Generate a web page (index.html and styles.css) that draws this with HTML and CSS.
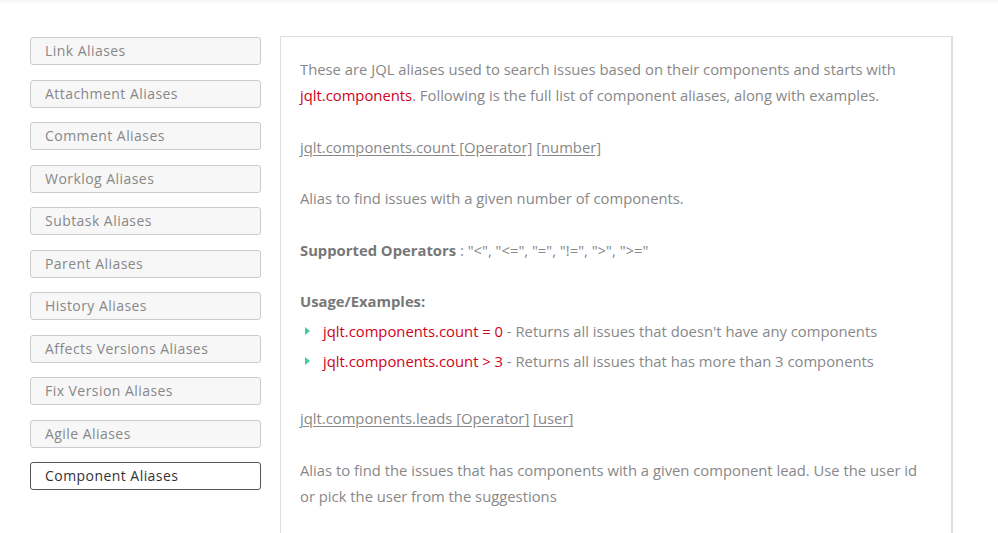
FILE: index.html
```html
<!DOCTYPE html>
<html>
<head>
<meta charset="utf-8">
<link rel="stylesheet" href="styles.css">
</head>
<body>
<div class="topshade"></div>
<div class="page">
  <nav class="sidebar">
    <a class="navbtn">Link Aliases</a>
    <a class="navbtn">Attachment Aliases</a>
    <a class="navbtn">Comment Aliases</a>
    <a class="navbtn">Worklog Aliases</a>
    <a class="navbtn">Subtask Aliases</a>
    <a class="navbtn">Parent Aliases</a>
    <a class="navbtn">History Aliases</a>
    <a class="navbtn">Affects Versions Aliases</a>
    <a class="navbtn">Fix Version Aliases</a>
    <a class="navbtn">Agile Aliases</a>
    <a class="navbtn active">Component Aliases</a>
  </nav>
  <main class="content">
    <p>These are JQL aliases used to search issues based on their components and starts with <span class="red">jqlt.components</span>. Following is the full list of component aliases, along with examples.</p>
    <p><span class="u">jqlt.components.count [Operator]</span> <span class="u">[number]</span></p>
    <p>Alias to find issues with a given number of components.</p>
    <p><b>Supported Operators</b> : "&lt;", "&lt;=", "=", "!=", "&gt;", "&gt;="</p>
    <p class="usage"><b>Usage/Examples:</b></p>
    <ul class="examples">
      <li><span class="red">jqlt.components.count = 0</span> - Returns all issues that doesn't have any components</li>
      <li><span class="red">jqlt.components.count &gt; 3</span> - Returns all issues that has more than 3 components</li>
    </ul>
    <p class="lead"><span class="u">jqlt.components.leads [Operator]</span> <span class="u">[user]</span></p>
    <p>Alias to find the issues that has components with a given component lead. Use the user id or pick the user from the suggestions</p>
  </main>
</div>
</body>
</html>
```
FILE: styles.css
```css
html, body {
  margin: 0;
  padding: 0;
  background: #ffffff;
  overflow: hidden;
}
body {
  font-family: "Open Sans", "Liberation Sans", sans-serif;
}
.topshade {
  height: 4px;
  background: linear-gradient(#f3f3f3, #ffffff);
}
.page {
  display: flex;
  align-items: flex-start;
  padding: 32px 0 0 30px;
  gap: 19px;
}
.sidebar {
  width: 231px;
  display: flex;
  flex-direction: column;
  gap: 14.5px;
  padding-top: 1px;
}
.navbtn {
  display: block;
  box-sizing: border-box;
  height: 28px;
  line-height: 26px;
  padding-left: 14px;
  border: 1px solid #cccccc;
  border-radius: 3px;
  background: #f7f7f7;
  color: #888888;
  font-size: 14px;
  letter-spacing: 0.45px;
}
.navbtn.active {
  background: #ffffff;
  border-color: #555555;
  color: #333333;
}
.content {
  width: 673px;
  box-sizing: border-box;
  height: 520px;
  border: 1px solid #dddddd;
  border-right: 2px solid #dddddd;
  padding: 19px 18px 0 19px;
  color: #888888;
  font-size: 14.8px;
  line-height: 26px;
}
.content p {
  margin: 0 0 25.6px 0;
}
.content b {
  color: #777777;
  font-weight: 700;
}
.red {
  color: #d0021b;
}
.u {
  text-decoration: underline;
  text-underline-offset: 2px;
}
.content p.usage {
  margin-bottom: 4px;
}
.examples {
  list-style: none;
  margin: 0;
  padding: 0;
}
.examples li {
  position: relative;
  padding-left: 23px;
  line-height: 26px;
  margin-bottom: 4px;
}
.examples li::before {
  content: "";
  position: absolute;
  left: 5px;
  top: 9px;
  border-left: 5px solid #3ccf9c;
  border-top: 4px solid transparent;
  border-bottom: 4px solid transparent;
}
.content p.lead {
  margin-top: 31px;
}
```
